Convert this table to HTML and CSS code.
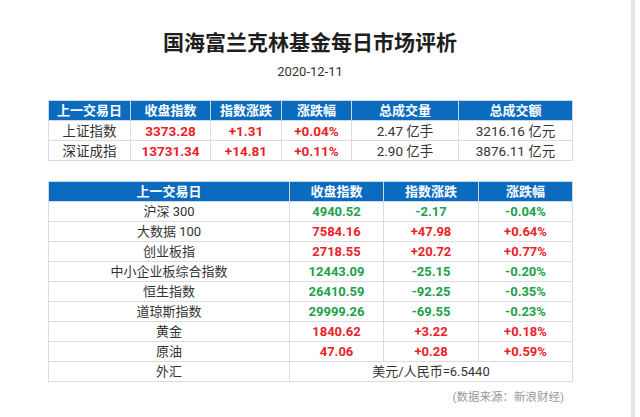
FILE: index.html
```html
<!DOCTYPE html>
<html lang="zh">
<head>
<meta charset="utf-8">
<title>国海富兰克林基金每日市场评析</title>
<link rel="stylesheet" href="styles.css">
</head>
<body>
<div class="page">
  <main class="main">
    <h1 class="title">国海富兰克林基金每日市场评析</h1>
    <p class="date">2020-12-11</p>

    <table class="tbl tbl-a">
      <colgroup>
        <col class="a1"><col class="a2"><col class="a3"><col class="a4"><col class="a5"><col class="a6">
      </colgroup>
      <thead>
        <tr><th>上一交易日</th><th>收盘指数</th><th>指数涨跌</th><th>涨跌幅</th><th>总成交量</th><th>总成交额</th></tr>
      </thead>
      <tbody>
        <tr><td>上证指数</td><td class="up num">3373.28</td><td class="up num">+1.31</td><td class="up num">+0.04%</td><td>2.47 亿手</td><td>3216.16 亿元</td></tr>
        <tr><td>深证成指</td><td class="up num">13731.34</td><td class="up num">+14.81</td><td class="up num">+0.11%</td><td>2.90 亿手</td><td>3876.11 亿元</td></tr>
      </tbody>
    </table>

    <table class="tbl tbl-b">
      <colgroup>
        <col class="b1"><col class="b2"><col class="b3"><col class="b4">
      </colgroup>
      <thead>
        <tr><th>上一交易日</th><th>收盘指数</th><th>指数涨跌</th><th>涨跌幅</th></tr>
      </thead>
      <tbody>
        <tr><td>沪深 300</td><td class="down num">4940.52</td><td class="down num">-2.17</td><td class="down num">-0.04%</td></tr>
        <tr><td>大数据 100</td><td class="up num">7584.16</td><td class="up num">+47.98</td><td class="up num">+0.64%</td></tr>
        <tr><td>创业板指</td><td class="up num">2718.55</td><td class="up num">+20.72</td><td class="up num">+0.77%</td></tr>
        <tr><td>中小企业板综合指数</td><td class="down num">12443.09</td><td class="down num">-25.15</td><td class="down num">-0.20%</td></tr>
        <tr><td>恒生指数</td><td class="down num">26410.59</td><td class="down num">-92.25</td><td class="down num">-0.35%</td></tr>
        <tr><td>道琼斯指数</td><td class="down num">29999.26</td><td class="down num">-69.55</td><td class="down num">-0.23%</td></tr>
        <tr><td>黄金</td><td class="up num">1840.62</td><td class="up num">+3.22</td><td class="up num">+0.18%</td></tr>
        <tr><td>原油</td><td class="up num">47.06</td><td class="up num">+0.28</td><td class="up num">+0.59%</td></tr>
        <tr><td>外汇</td><td colspan="3">美元/人民币=6.5440</td></tr>
      </tbody>
    </table>

    <p class="source">(数据来源：新浪财经)</p>
  </main>
  <div class="rail"></div>
</div>
</body>
</html>
```

FILE: styles.css
```css
html, body {
  margin: 0;
  padding: 0;
  background: #ffffff;
}

body {
  font-family: Roboto, "Noto Sans CJK SC", sans-serif;
  color: #333333;
}

.page {
  display: flex;
  height: 417px;
  overflow: hidden;
}

.main {
  width: 631px;
  flex: none;
  padding-top: 30px;
  box-sizing: border-box;
}

.rail {
  width: 4px;
  flex: none;
  background: #e6e6e6;
}

.title {
  margin: 0;
  font-size: 21px;
  line-height: 26px;
  font-weight: 700;
  color: #1e1e1e;
  text-align: center;
  width: 620px;
}

.date {
  margin: 8px 0 0;
  width: 620px;
  font-size: 13px;
  line-height: 16px;
  text-align: center;
  color: #333333;
}

.tbl {
  border-collapse: collapse;
  table-layout: fixed;
  width: 524px;
  margin-left: 48px;
  font-size: 13px;
}

.tbl-a { margin-top: 20px; }
.tbl-b { margin-top: 20px; }

.tbl th,
.tbl td {
  border: 1px solid #dcdcdc;
  height: 19px;
  padding: 0;
  text-align: center;
  line-height: 18px;
  white-space: nowrap;
}

.tbl th {
  background: #0b6cbf;
  color: #ffffff;
  font-weight: 700;
  border-color: #cfd9e6;
}

.tbl-a td { font-size: 13.5px; }

.num { font-weight: 700; }
.up { color: #ea2228; }
.down { color: #22a04b; }

.a1 { width: 82px; }
.a2 { width: 80px; }
.a3 { width: 71px; }
.a4 { width: 70px; }
.a5 { width: 107px; }
.a6 { width: 114px; }

.b1 { width: 241px; }
.b2 { width: 94px; }
.b3 { width: 95px; }
.b4 { width: 94px; }

.source {
  margin: 7px 0 0;
  width: 564px;
  text-align: right;
  font-size: 11.5px;
  line-height: 16px;
  color: #9a9a9a;
}
```
